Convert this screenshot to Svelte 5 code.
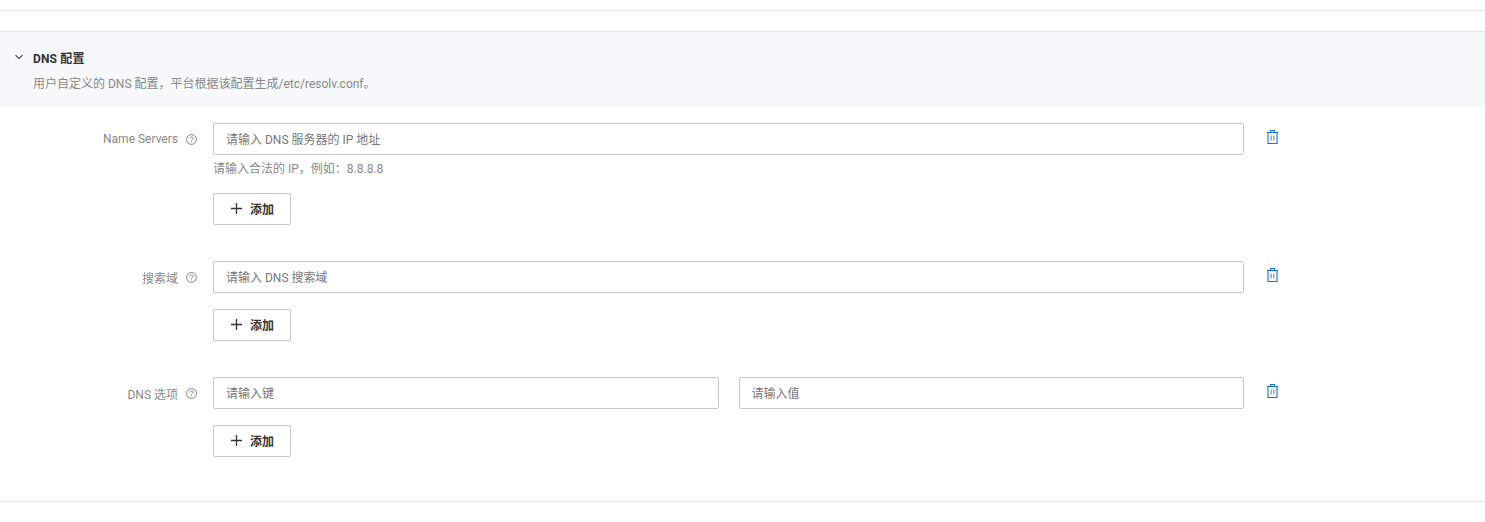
<script lang="ts">
  interface Row {
    label: string;
    placeholders: string[];
    help?: string;
  }

  const rows: Row[] = [
    { label: 'Name Servers', placeholders: ['请输入 DNS 服务器的 IP 地址'], help: '请输入合法的 IP，例如：8.8.8.8' },
    { label: '搜索域', placeholders: ['请输入 DNS 搜索域'] },
    { label: 'DNS 选项', placeholders: ['请输入键', '请输入值'] },
  ];
</script>

<div class="page">
  <section class="dns">
    <header class="head">
      <div class="title">
        <svg class="chevron" width="10" height="10" viewBox="0 0 10 10" fill="none" stroke="#444" stroke-width="1.1">
          <path d="M1.5 3.2 5 6.4l3.5-3.2" />
        </svg>
        <h3>DNS 配置</h3>
      </div>
      <p>用户自定义的 DNS 配置，平台根据该配置生成/etc/resolv.conf。</p>
    </header>

    <div class="form">
      {#each rows as row}
        <div class="row">
          <div class="label">
            <span>{row.label}</span>
            <svg class="help" width="11" height="11" viewBox="0 0 11 11" fill="none" stroke="#808080">
              <circle cx="5.5" cy="5.5" r="4.9" stroke-width="1" />
              <path d="M3.9 4.4c0-.9.7-1.4 1.6-1.4s1.6.5 1.6 1.3c0 1.2-1.6 1.1-1.6 2.4" stroke-width="1" />
              <path d="M5.5 7.6v.9" stroke-width="1" />
            </svg>
          </div>
          <div class="control">
            <div class="line">
              <div class="inputs">
                {#each row.placeholders as placeholder}
                  <input type="text" {placeholder} />
                {/each}
              </div>
              <button class="trash" aria-label="删除">
                <svg width="11" height="14" viewBox="0 0 11 14" fill="none" stroke="#0f74dc" stroke-width="1.1">
                  <path d="M0 2.5h11M3.5 2.5V.5h4v2" />
                  <path d="M1 2.5v11h9v-11" />
                  <path d="M4.2 5.5v5M6.8 5.5v5" stroke="#6f96b8" stroke-width="1.2" />
                </svg>
              </button>
            </div>
            {#if row.help}
              <div class="hint">{row.help}</div>
            {/if}
            <button class="add">
              <svg width="11" height="11" viewBox="0 0 11 11" stroke="#333" stroke-width="1.3">
                <path d="M5.5 0v11M0 5.5h11" />
              </svg>
              <span>添加</span>
            </button>
          </div>
        </div>
      {/each}
    </div>
  </section>
</div>

<style>
  :global(body) {
    margin: 0;
    background: #fff;
  }

  .page {
    padding-top: 10px;
    font-family: Roboto, "Noto Sans CJK SC", sans-serif;
    font-size: 12px;
    color: #888;
  }

  .dns {
    border-top: 1px solid #e8e8e8;
    padding-top: 20px;
  }

  .head {
    height: 76px;
    box-sizing: border-box;
    border-top: 1px solid #e4e5e7;
    background: #f7f8fa;
    padding: 18px 14px 0;
  }

  .title {
    display: flex;
    align-items: center;
    gap: 9px;
  }

  .chevron {
    margin-top: -4px;
  }

  h3 {
    margin: 0;
    font-size: 12px;
    line-height: 18px;
    font-weight: 700;
    letter-spacing: 0.15px;
    color: #333;
  }

  .head p {
    margin: 8px 0 0 19px;
    line-height: 16px;
    color: #888;
  }

  .form {
    display: flex;
    flex-direction: column;
    gap: 36px;
    padding: 16px 0 44px;
    border-bottom: 1px solid #e8e8e8;
  }

  .row {
    display: flex;
  }

  .label {
    width: 197px;
    height: 32px;
    display: flex;
    justify-content: flex-end;
    align-items: center;
    gap: 8px;
    color: #888;
    flex-shrink: 0;
    margin-right: 16px;
  }

  .help {
    margin-top: 1px;
  }

  .control {
    flex: 1;
  }

  .line {
    display: flex;
  }

  .inputs {
    width: 1031px;
    display: flex;
    gap: 20px;
  }

  input {
    flex: 1;
    min-width: 0;
    height: 32px;
    box-sizing: border-box;
    padding: 1px 12px 0;
    border: 1px solid #c4c6cc;
    border-radius: 2px;
    font: inherit;
    outline: none;
  }

  input::placeholder {
    color: #777;
    opacity: 1;
  }

  .trash {
    width: 11px;
    height: 14px;
    padding: 0;
    margin: 7px 0 0 23px;
    border: none;
    background: none;
    display: flex;
    cursor: pointer;
  }

  .hint {
    margin-top: 6px;
    line-height: 16px;
    color: #888;
  }

  .add {
    display: flex;
    align-items: center;
    justify-content: center;
    gap: 8px;
    width: 78px;
    height: 32px;
    margin-top: 16px;
    padding: 0 0 2px 1px;
    border: 1px solid #c4c6cc;
    border-radius: 2px;
    background: #fff;
    color: #333;
    font: inherit;
    font-weight: 700;
    cursor: pointer;
  }
</style>
